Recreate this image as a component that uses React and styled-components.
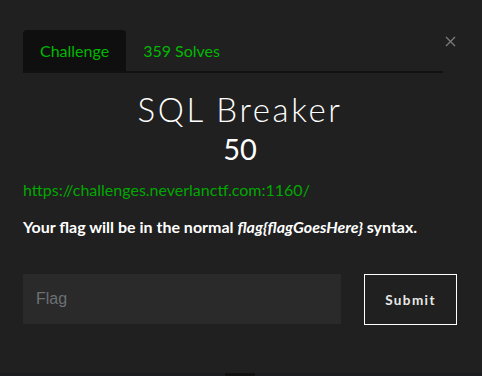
import React, { useState } from 'react';
import styled, { createGlobalStyle } from 'styled-components';

const GlobalStyle = createGlobalStyle`
    html, body {
        margin: 0;
        padding: 0;
        background: #202020;
        height: 100%;
    }
    body {
        font-family: Lato, 'Open Sans', sans-serif;
        overflow: hidden;
    }
`;

const Page = styled.div`
    width: 482px;
    height: 376px;
    display: flex;
    flex-direction: column;
    background: #202020;
    color: #ffffff;
`;

const Modal = styled.div`
    flex: 1;
    padding: 30px 25px 0 23px;
    display: flex;
    flex-direction: column;
`;

const TopRow = styled.div`
    display: flex;
    align-items: flex-start;
`;

const Tabs = styled.nav`
    flex: 1;
    display: flex;
    border-bottom: 2px solid #111111;
`;

const Tab = styled.button`
    font-family: Lato, sans-serif;
    font-size: 16px;
    color: #00b800;
    background: ${(p) => (p.$active ? '#0f0f0f' : 'transparent')};
    border: none;
    border-radius: 4px 4px 0 0;
    padding: 0 17px;
    height: 41px;
    cursor: pointer;
`;

const Close = styled.button`
    width: 14px;
    height: 14px;
    margin-top: 4px;
    padding: 0;
    border: none;
    background: transparent;
    display: flex;
    align-items: center;
    justify-content: center;
    cursor: pointer;
`;

const Title = styled.h1`
    margin: 16px 0 0;
    text-align: center;
    font-family: Lato, sans-serif;
    font-weight: 300;
    font-size: 33px;
    letter-spacing: 2.6px;
    line-height: 40px;
`;

const Value = styled.h2`
    margin: 2px 0 0;
    text-align: center;
    font-family: Lato, sans-serif;
    font-weight: 400;
    font-size: 29px;
    line-height: 36px;
`;

const Link = styled.a`
    display: block;
    margin-top: 12px;
    font-family: Lato, sans-serif;
    font-size: 16px;
    line-height: 22px;
    color: #00a800;
    text-decoration: none;
`;

const Description = styled.p`
    margin: 15px 0 0;
    font-family: Lato, sans-serif;
    font-weight: 700;
    font-size: 16px;
    line-height: 22px;
`;

const Form = styled.form`
    display: flex;
    gap: 23px;
    margin-top: 36px;
`;

const Input = styled.input`
    width: 318px;
    height: 50px;
    box-sizing: border-box;
    padding: 0 13px;
    border: none;
    background: #2a2a2a;
    color: #ffffff;
    font-family: 'Liberation Sans', Arial, sans-serif;
    font-size: 16px;
    outline: none;

    &::placeholder {
        color: #6c7075;
    }
`;

const Submit = styled.button`
    width: 93px;
    height: 51px;
    box-sizing: border-box;
    background: transparent;
    border: 1px solid #ffffff;
    color: #e8e8e8;
    font-family: Lato, sans-serif;
    font-weight: 700;
    font-size: 13.5px;
    letter-spacing: 1.4px;
    cursor: pointer;
`;

const Footer = styled.div`
    height: 3px;
    background: #1a1d20;
    display: flex;
    justify-content: center;
`;

const FooterTab = styled.div`
    width: 30px;
    margin-right: 2px;
    background: #111111;
`;

const App = () => {
    const [active, setActive] = useState('challenge');

    return (
        <>
            <GlobalStyle />
            <Page>
                <Modal>
                    <TopRow>
                        <Tabs>
                            <Tab $active={active === 'challenge'} onClick={() => setActive('challenge')}>
                                Challenge
                            </Tab>
                            <Tab $active={active === 'solves'} onClick={() => setActive('solves')}>
                                359 Solves
                            </Tab>
                        </Tabs>
                        <Close aria-label="Close">
                            <svg width="11" height="11" viewBox="0 0 11 11">
                                <path d="M1 1L10 10M10 1L1 10" stroke="#7a7a7a" strokeWidth="1.4" />
                            </svg>
                        </Close>
                    </TopRow>
                    <Title>SQL Breaker</Title>
                    <Value>50</Value>
                    <Link href="#">https://challenges.neverlanctf.com:1160/</Link>
                    <Description>
                        Your flag will be in the normal <i>flag{'{'}flagGoesHere{'}'}</i> syntax.
                    </Description>
                    <Form onSubmit={(e) => e.preventDefault()}>
                        <Input placeholder="Flag" />
                        <Submit type="submit">Submit</Submit>
                    </Form>
                </Modal>
                <Footer>
                    <FooterTab />
                </Footer>
            </Page>
        </>
    );
};

export default App;
